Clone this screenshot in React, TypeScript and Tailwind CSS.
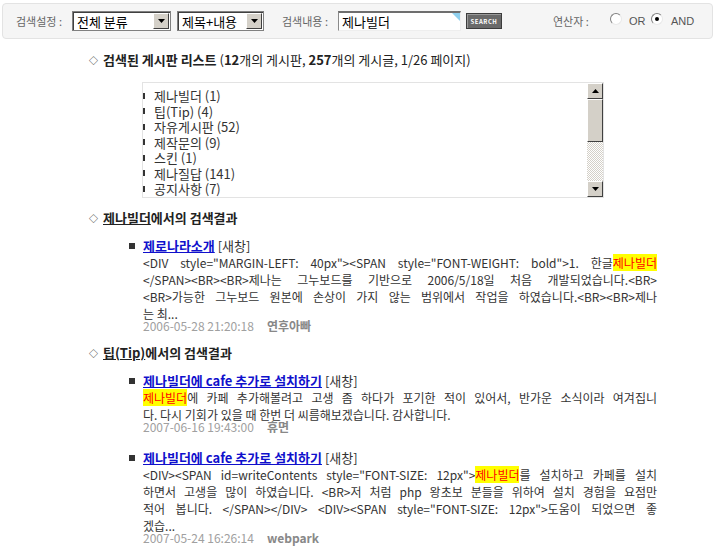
import React from "react";

const font = "font-['Noto_Sans_CJK_KR','Liberation_Sans',sans-serif]";

const Hl = ({ children }: { children: React.ReactNode }) => (
    <span className="bg-[#ffff00] text-[#ff0000]">{children}</span>
);

const Line = ({ children, last }: { children: React.ReactNode; last?: boolean }) => (
    <div className={last ? "h-[17px]" : "h-[17px] text-justify [text-align-last:justify]"}>{children}</div>
);

const Select = ({ label, w }: { label: string; w: string }) => (
    <div className={`${w} h-[20px] flex items-center bg-white border border-[#808080] shadow-[inset_1px_1px_0_#404040]`}>
        <span className="grow pl-[4px] text-[13px] leading-none text-black">{label}</span>
        <div className="w-[16px] h-[16px] mr-[1px] bg-[#d4d0c8] border border-t-white border-l-white border-b-[#404040] border-r-[#404040] flex items-center justify-center">
            <svg width="7" height="4" viewBox="0 0 7 4"><path d="M0 0h7L3.5 4z" fill="#000" /></svg>
        </div>
    </div>
);

const Radio = ({ on }: { on?: boolean }) => (
    <div className="w-[12px] h-[12px] rounded-full bg-white border border-t-[#808080] border-l-[#808080] border-b-[#e8e8e8] border-r-[#e8e8e8] flex items-center justify-center -mt-[5px]">
        {on && <div className="w-[4px] h-[4px] rounded-full bg-black" />}
    </div>
);

const SectionTitle = ({ children }: { children: React.ReactNode }) => (
    <div className="flex items-center h-[18px] text-[13px] text-[#222]">
        <span className="w-[14px] text-[9px] leading-none">◇</span>
        <div className="font-bold">{children}</div>
    </div>
);

const Post = ({ title, lines, date, author }: { title: string; lines: React.ReactNode[]; date: string; author: string }) => (
    <div className="flex">
        <div className="w-[14px] pt-[6px]"><div className="w-[6px] h-[6px] bg-[#333]" /></div>
        <div className="w-[514px]">
            <div className="h-[17px] text-[13px] leading-[17px]">
                <a href="#" className="font-bold text-[#1010cc] underline">{title}</a>
                <span className="text-[#333]"> [새창]</span>
            </div>
            <div className="text-[12px] leading-[17px] text-[#333]">
                {lines.map((l, i) => (
                    <Line key={i} last={i === lines.length - 1}>{l}</Line>
                ))}
            </div>
            <div className="-mt-[2px] flex gap-[13px] text-[12px] leading-[12px]">
                <span className="text-[#a0a0a0]">{date}</span>
                <span className="font-bold text-[#888]">{author}</span>
            </div>
        </div>
    </div>
);

const boards = ["제나빌더 (1)", "팁(Tip) (4)", "자유게시판 (52)", "제작문의 (9)", "스킨 (1)", "제나질답 (141)", "공지사항 (7)"];

export default function App() {
    return (
        <div className={`${font} w-[725px] h-[548px] bg-white overflow-hidden`}>
            <div className="mx-[2px] mt-[3px] w-[711px] h-[36px] rounded-[4px] border border-[#e3e3e3] bg-[#f5f5f5] flex items-center pl-[13px] text-[11px] text-[#666]">
                <span className="w-[56px]">검색설정 :</span>
                <Select label="전체 분류" w="w-[99px]" />
                <div className="w-[6px]" />
                <Select label="제목+내용" w="w-[87px]" />
                <span className="ml-[18px] w-[56px]">검색내용 :</span>
                <div className="relative w-[123px] h-[20px] bg-white border-t-2 border-l border-t-[#6e6e6e] border-l-[#8a8a8a] border-b border-r border-b-[#eee] border-r-[#eee] flex items-center pl-[3px] text-[13px] text-black">
                    제나빌더
                    <svg className="absolute top-0 right-0" width="8" height="8" viewBox="0 0 8 8"><path d="M0 0h8v8z" fill="#8fd0ee" /></svg>
                </div>
                <div className="ml-[5px] w-[36px] h-[16px] bg-[#6a6a6a] border border-[#3c3c3c] shadow-[inset_1px_1px_0_#9a9a9a] flex items-center justify-center text-[6px] font-bold tracking-[0.5px] text-white">SEARCH</div>
                <span className="ml-[51px] w-[57px]">연산자 :</span>
                <Radio />
                <span className="ml-[7px] w-[22px] font-['Liberation_Sans'] text-[11px] text-[#555]">OR</span>
                <Radio on />
                <span className="ml-[8px] font-['Liberation_Sans'] text-[11px] text-[#555]">AND</span>
            </div>

            <div className="pl-[89px] pt-[12px]">
                <SectionTitle>
                    검색된 게시판 리스트 <span className="font-normal">(<b>12</b>개의 게시판, <b>257</b>개의 게시글, 1/26 페이지)</span>
                </SectionTitle>

                <div className="ml-[53px] mt-[13px] w-[462px] h-[116px] border border-[#e3e3e3] flex">
                    <div className="grow pt-[5px] text-[13px] leading-[15.5px] text-[#333]">
                        {boards.map((b) => (
                            <div key={b} className="flex items-center">
                                <div className="w-[2px] h-[6px] bg-[#333] mr-[9px]" />
                                {b}
                            </div>
                        ))}
                    </div>
                    <div className="w-[16px] flex flex-col">
                        <div className="h-[16px] bg-[#d4d0c8] border border-t-white border-l-white border-b-[#404040] border-r-[#404040] flex items-center justify-center">
                            <svg width="7" height="4" viewBox="0 0 7 4"><path d="M3.5 0L7 4H0z" fill="#000" /></svg>
                        </div>
                        <div className="h-[43px] bg-[#d4d0c8] border border-t-white border-l-white border-b-[#404040] border-r-[#404040]" />
                        <div className="grow bg-[repeating-conic-gradient(#d4d0c8_0%_25%,#ffffff_0%_50%)] bg-[length:2px_2px]" />
                        <div className="h-[16px] bg-[#d4d0c8] border border-t-white border-l-white border-b-[#404040] border-r-[#404040] flex items-center justify-center">
                            <svg width="7" height="4" viewBox="0 0 7 4"><path d="M0 0h7L3.5 4z" fill="#000" /></svg>
                        </div>
                    </div>
                </div>

                <div className="mt-[11px]">
                    <SectionTitle><span className="underline">제나빌더</span>에서의 검색결과</SectionTitle>
                </div>
                <div className="pl-[40px] mt-[10px]">
                    <Post
                        title="제로나라소개"
                        lines={[
                            <>{'<DIV style="MARGIN-LEFT: 40px"><SPAN style="FONT-WEIGHT: bold">1. 한글'}<Hl>제나빌더</Hl></>,
                            <>{"</SPAN><BR><BR>제나는 그누보드를 기반으로 2006/5/18일 처음 개발되었습니다.<BR>"}</>,
                            <>{"<BR>가능한 그누보드 원본에 손상이 가지 않는 범위에서 작업을 하였습니다.<BR><BR>제나"}</>,
                            <>는 최...</>,
                        ]}
                        date="2006-05-28 21:20:18"
                        author="연후아빠"
                    />
                </div>

                <div className="mt-[12px]">
                    <SectionTitle><span className="underline">팁(Tip)</span>에서의 검색결과</SectionTitle>
                </div>
                <div className="pl-[40px] mt-[10px] flex flex-col gap-[16px]">
                    <Post
                        title="제나빌더에 cafe 추가로 설치하기"
                        lines={[
                            <><Hl>제나빌더</Hl>에 카페 추가해볼려고 고생 좀 하다가 포기한 적이 있어서, 반가운 소식이라 여겨집니</>,
                            <>다. 다시 기회가 있을 때 한번 더 씨름해보겠습니다. 감사합니다.</>,
                        ]}
                        date="2007-06-16 19:43:00"
                        author="휴면"
                    />
                    <Post
                        title="제나빌더에 cafe 추가로 설치하기"
                        lines={[
                            <>{'<DIV><SPAN id=writeContents style="FONT-SIZE: 12px">'}<Hl>제나빌더</Hl>를 설치하고 카페를 설치</>,
                            <>{"하면서 고생을 많이 하였습니다. <BR>저 처럼 php 왕초보 분들을 위하여 설치 경험을 요점만"}</>,
                            <>{'적어 봅니다. </SPAN></DIV> <DIV><SPAN style="FONT-SIZE: 12px">도움이 되었으면 좋'}</>,
                            <>겠습...</>,
                        ]}
                        date="2007-05-24 16:26:14"
                        author="webpark"
                    />
                </div>
            </div>
        </div>
    );
}
